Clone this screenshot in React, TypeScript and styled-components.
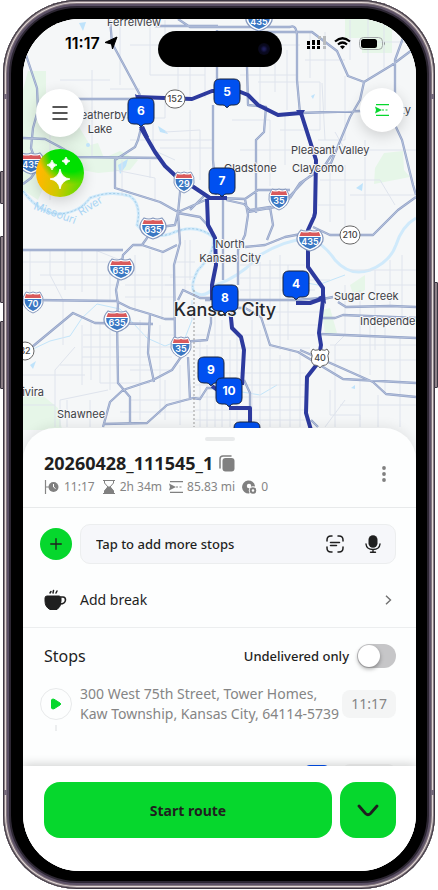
import React from "react";
import styled, { createGlobalStyle } from "styled-components";

const GlobalStyle = createGlobalStyle`
  * { box-sizing: border-box; }
  body { margin: 0; background: #fff; font-family: "Noto Sans", sans-serif; color: #1f1f1f; }
  button { font: inherit; color: inherit; border: 0; padding: 0; background: none; cursor: pointer; }
`;

/* ---------- Device ---------- */

const Device = styled.div`
  position: relative;
  display: flex;
  height: calc(100vh - 1px);
  min-height: 760px;
  margin: 0 3px 1px 3px;
  padding: 19px 19px 18px 20px;
  border-radius: 74px;
  background: #000;
  box-shadow:
    inset 0 0 0 1px #3d3742,
    inset 0 0 0 2px #8c8085,
    inset 0 0 0 3px #e4dada,
    inset 0 0 0 4px #85787f,
    inset 0 0 0 6px #5b5065,
    inset 0 0 0 8px #2d2733;
`;

const SideKey = styled.span<{ $side: "left" | "right"; $top: number; $height: number }>`
  position: absolute;
  ${(p) => p.$side}: -3px;
  top: ${(p) => p.$top}px;
  width: 4px;
  height: ${(p) => p.$height}px;
  border: 1px solid #3d3742;
  border-radius: 1px;
  background: #8c8087;
`;

const Antenna = styled.span<{ $side: "left" | "right"; $edge: "top" | "bottom" }>`
  position: absolute;
  ${(p) => p.$side}: 1px;
  ${(p) => p.$edge}: 94px;
  width: 3px;
  height: 5px;
  background: #75697a;
`;

const Screen = styled.main`
  position: relative;
  flex: 1;
  min-width: 0;
  display: flex;
  flex-direction: column;
  overflow: hidden;
  border-radius: 57px;
  background: #fff;
`;

/* ---------- Overlays ---------- */

const StatusBar = styled.div`
  position: absolute;
  inset: 11px 30px auto 42px;
  display: flex;
  align-items: center;
  justify-content: space-between;
  height: 26px;
  color: #000;
  font: 600 16px/26px Inter, sans-serif;
`;

const StatusGroup = styled.div<{ $gap: number }>`
  display: flex;
  align-items: center;
  gap: ${(p) => p.$gap}px;
`;

const Island = styled.div`
  position: absolute;
  top: 12px;
  left: 50%;
  width: 124px;
  height: 36px;
  margin-left: -62px;
  border-radius: 18px;
  background: #000;
  display: flex;
  align-items: center;
  justify-content: flex-end;
  padding-right: 12px;
`;

const Lens = styled.span`
  width: 12px;
  height: 12px;
  border-radius: 50%;
  background: radial-gradient(circle, #1e1e58 0 12%, #0a0a24 40%, #050509 100%);
`;

const MapActions = styled.div<{ $side: "left" | "right" }>`
  position: absolute;
  top: ${(p) => (p.$side === "left" ? 70 : 69)}px;
  ${(p) => p.$side}: ${(p) => (p.$side === "left" ? 13 : 12)}px;
  display: grid;
  justify-items: center;
  gap: 12px;
`;

const RoundButton = styled.button<{ $size: number; $magic?: boolean }>`
  width: ${(p) => p.$size}px;
  height: ${(p) => p.$size}px;
  border-radius: 50%;
  display: grid;
  place-items: center;
  background: ${(p) =>
    p.$magic
      ? "radial-gradient(circle at 72% 5%, #00e000 0 36%, rgba(0, 224, 0, 0) 58%), linear-gradient(100deg, #ffb800 15%, #d0c800 50%, #62dc00 90%)"
      : "#fff"};
  box-shadow: 0 4px 14px rgba(0, 0, 0, 0.16);
`;

/* ---------- Map ---------- */

const MapArea = styled.section`
  flex: none;
  aspect-ratio: 393 / 441;
  max-height: 52%;
  background: #f5f7f8;
  svg { display: block; width: 100%; height: 100%; }
`;

type Kind = "inter" | "us" | "oval";

const SHIELDS: [Kind, string, number, number][] = [
  ["inter", "435", 259, 20], ["inter", "29", 184, 182], ["inter", "435", 31, 163],
  ["inter", "635", 153, 228], ["inter", "635", 121, 269], ["inter", "635", 117, 321],
  ["inter", "70", 33, 302], ["inter", "35", 181, 347], ["inter", "35", 279, 199],
  ["inter", "435", 310, 240], ["us", "40", 320, 358], ["oval", "152", 175, 99],
  ["oval", "210", 350, 235], ["oval", "32", 25, 351],
];

const PINS: [string, number, number][] = [
  ["6", 141, 111], ["5", 227, 92], ["7", 222, 181], ["4", 296, 284],
  ["8", 225, 298], ["9", 211, 370], ["10", 229, 391], ["11", 247, 435],
];

function Shield({ kind, label, x, y }: { kind: Kind; label: string; x: number; y: number }) {
  const wide = label.length > 2;
  return (
    <g transform={`translate(${x} ${y})`}>
      {kind === "inter" && (
        <g transform={wide ? "scale(1.28 1)" : undefined}>
          <path d="M-7-10Q-3-8 0-10Q3-8 7-10Q11-5 10 1Q8 8 0 11Q-8 8-10 1Q-11-5-7-10Z" fill="#fff" stroke="#8598bd" strokeWidth="1" />
          <path d="M-7-8Q-3-7 0-8Q3-7 7-8L8.200-4H-8.200Z" fill="#d95a5c" />
          <path d="M-8.500-3H8.500Q9 5 0 9Q-9 5-8.500-3Z" fill="#3b78c3" />
        </g>
      )}
      {kind === "us" && (
        <path d="M-7-9Q-5-7-3-8Q-1-9 0-7Q1-9 3-8Q5-7 7-9L9-6Q7-2 8.500 1Q9 7 3 7.500Q1 8 0 10Q-1 8-3 7.500Q-9 7-8.500 1Q-7-2-9-6Z" fill="#fff" stroke="#666" />
      )}
      {kind === "oval" && (
        <rect x={wide ? -10 : -9} y="-9" width={wide ? 20 : 18} height="18" rx="9" fill="#fff" stroke="#666" />
      )}
      <text
        y={kind === "inter" ? 5 : 3}
        textAnchor="middle"
        fontSize="9"
        fontWeight={kind === "inter" ? 600 : 500}
        fill={kind === "inter" ? "#fff" : "#444"}
      >
        {label}
      </text>
    </g>
  );
}

function Pin({ label, x, y }: { label: string; x: number; y: number }) {
  return (
    <g transform={`translate(${x} ${y})`}>
      <path
        d="M-7-13H7Q13-13 13-7V7Q13 13 7 13H4Q2 13 1 15Q0 16-1 15Q-2 13-4 13H-7Q-13 13-13 7V-7Q-13-13-7-13Z"
        fill="#0050f0" stroke="#17223d" strokeWidth="1"
      />
      <text y="4" textAnchor="middle" fontSize="12" fontWeight="700" fill="#fff">{label}</text>
    </g>
  );
}

const MINOR =
  "M50 110V200M92 70V157M60 80H110M110 89H140M120 20V85M130 45H218M150 20V75H205M165 20V60M178 45V90M190 40V98M205 60V98M120 118H165V99M153 112V150L175 160M130 140H214M165 132L200 130V180M190 110V170M160 148H214M115 170L155 178V202M150 160V178M122 196V160" +
  "M260 30V110M275 32V92M287 50V110M310 32V78M325 32V110M240 45H300M240 75H297M258 82H320V130H280M322 83L325 140M305 60H345M345 76V140H318M232 120H270M240 150H310M270 120V186M285 115V165M335 132L345 150H416M350 20V60M368 20V80M384 20V68M360 42H416M330 165V222M345 165V230M320 180H380L395 205M350 195H416M365 140V220M318 205H345" +
  "M30 250V300M50 250V275L63 300V345M65 250V290M82 250V292M97 250V300M110 260V300M23 262H123M23 285H120M40 275H110M95 250L125 262M125 285H175M130 275H174M125 297H176M135 255V312M150 250V300M162 252V320M185 240V290M165 285H215M170 277H194M175 262H195M190 240V280" +
  "M82 325V385M91 320V380M100 323V383M110 325V390M83 335H175M83 347H174M82 357H172M60 365H150M23 375H85M75 347L55 370V427M100 383H150M130 370H172M130 400H190M120 412H193M60 427V400L108 390M67 400V427M90 400V427M140 320V420M160 325V415M165 380V420M180 365V425M23 405H55" +
  "M200 340V427M207 345V427M215 315V427M222 320V427M230 340V427M237 335V427M252 320V427M260 330V427M270 345V427M280 355V427M290 350V427M300 355V427M195 335H315M195 348H310M195 360H300M195 373H306M195 385H306M195 397H306M195 410H306M195 420H306" +
  "M250 255V315M260 262V315M270 260V320M280 255V350M288 265V340M240 265H305M240 278H308M240 290H315M250 312H320M262 325H318M330 280H310M345 285V335L335 345V427M360 290V420M375 270V350M390 260V305M402 255V318M350 270H416M375 285H416M330 345H416M335 360H416M340 405H416M370 320V375M385 318V394M400 338V427M330 390V415H360V427M378 395V427M325 427L345 400";

const ROADS =
  "M26 55L37 88L38 110L33 128L31 148L38 168L31 178L23 184M110 19L112 43L140 95M50 99H137M23 138L45 139L60 147L77 157L160 158M141 128L138 140L135 147L115 160V188L160 202L178 212" +
  "M155 19V26H218M178 19L190 27H290Q296 24 297 35V80L300 113L361 111M218 32H312L337 51L348 76L364 82L392 65L412 50M403 38L395 60V125L402 140L413 185L416 195" +
  "M364 82L360 100L350 117L331 163L300 183L290 198M335 150L325 165L305 180L288 198M217 30V90M213 105V160L216 195M247 67L248 105L266 107L264 132L256 140V213" +
  "M218 198L245 199L258 190H290M245 199L248 215L245 235L238 250V285M223 200V280M226 200L244 204L250 210L270 207L273 225L267 240M290 198L275 207L248 212M245 247L265 245L285 237L312 232M313 227L330 235H373L398 210L416 197" +
  "M23 250H123M178 212L210 198M178 212L175 225L153 228L147 238L142 245L133 245L123 255L121 269L116 290L118 304L117 321L118 383L130 397V425M142 245L163 252L177 245M178 213L180 243L174 265L175 340M181 182L178 213L200 217L212 230M190 210L205 195" +
  "M33 300L116 301L130 308L150 314L165 319H175M23 355L32 347L73 313L95 323L153 324M150 314L148 353L154 382M181 357L172 370L153 380L123 390L110 402L103 427M188 357L190 400M103 424L147 423L167 405L193 398L200 399L207 388H216M181 342L207 340L211 323V310M178 300L183 290L200 298H213" +
  "M205 300H296L322 298M213 308H245L261 317L270 345L298 352L343 379L416 383M300 350L328 362L373 382L386 394L416 397M323 299L333 297M338 302L346 307L391 306L416 307M321 318H335L343 315L416 318M320 334L416 338M244 380L250 393V427M311 420L318 427";

const ROUTE =
  "M137 97L192 99L212 91H238L248 95L258 105L278 115L301 113L316 160L315 213L314 217L308 230V267L323 288V300L319 333L321 345L318 363L307 377L306 413L311 430" +
  "M296 303H310L324 298M141 128L155 152L165 166L180 180L192 186L210 198H227M207 199L208 225L215 238L216 265L212 285V300M230 308L232 328L241 337L244 350L242 385M229 408H250V430M212 386L220 392";

function MapView() {
  return (
    <MapArea aria-label="Route map">
      <svg viewBox="23 19 393 441" preserveAspectRatio="xMidYMin slice" fontFamily="Inter, sans-serif">
        <rect x="23" y="19" width="393" height="441" fill="#f5f7f8" />
        <g fill="#e6f6e8">
          <path d="M28 71H46V110H62L76 122L90 145L98 143L104 158L120 151L138 160L130 170L98 173L70 168L50 172L38 200L23 190V90Z" />
          <path d="M345 19H392V53H362V38H345ZM375 168L384 153L403 151L404 170L410 177L374 184Z" />
          <path d="M23 392L42 395L58 408L62 430H23ZM350 285L365 275V290L354 297ZM322 310L330 308L337 333L325 335Z" />
        </g>
        <g fill="#bfe3fb">
          <path d="M79 23L86 22L83 31ZM158 126L166 131L168 134L160 132ZM118 165L128 159L126 166L120 174ZM356 188L363 183L362 191ZM311 96L315 94L313 99ZM30 365L36 361L33 369ZM351 388L355 385V389Z" />
          <circle cx="88" cy="145" r="2" />
        </g>
        <g fill="none">
          <path d="M23 191Q40 214 60 214Q80 212 90 198Q110 190 130 196Q142 205 137 225Q150 240 170 234Q195 222 213 237Q216 252 198 270Q190 285 194 292Q205 300 216 285Q240 277 260 255Q285 240 310 238Q325 245 335 260Q350 277 370 270Q390 262 396 245Q402 226 416 218" stroke="#d0eafb" strokeWidth="3" />
          <path d="M23 191Q40 214 60 214Q80 212 90 198Q110 190 130 196Q142 205 137 225Q150 240 170 234Q195 222 213 237Q216 252 198 270Q190 285 194 292" stroke="#9cc8e4" strokeDasharray="2 2" />
          <path d="M33 349L50 341L70 336L82 318L97 304L120 309L147 338L165 346L185 338L192 320V300M230 390L260 395L277 385M290 280L318 285L345 275" stroke="#c3e5fa" strokeWidth="1" />
          <path d={MINOR} stroke="#dfe4ed" strokeLinejoin="round" />
          <path d={ROADS} stroke="#94a4c8" strokeWidth="2.300" strokeLinejoin="round" />
          <path d={ROADS} stroke="#b3bfda" strokeWidth="1" strokeLinejoin="round" />
          <path d="M194 290V427" stroke="#999" strokeDasharray="2 2" />
        </g>
        <g fontSize="11" fill="#a9d5f5">
          <text transform="translate(33 209) rotate(20)">Missouri</text>
          <text transform="translate(81 216) rotate(-32)">River</text>
        </g>
        <path d={ROUTE} fill="none" stroke="#2d3a9e" strokeWidth="4" strokeLinejoin="round" />
        <path d="M135 94L142 98L136 99ZM139 127L144 126L149 137L145 138ZM296 110L305 110L301 117ZM318 297L325 294L326 304Z" fill="#2d3a9e" />
        {SHIELDS.map(([kind, label, x, y]) => (
          <Shield key={`${label}-${x}`} kind={kind} label={label} x={x} y={y} />
        ))}
        <g fontSize="11" fill="#3d4046" stroke="#f7f8f9" strokeWidth="2" paintOrder="stroke" strokeLinejoin="round">
          <text x="107" y="26">Ferrelview</text>
          <text x="127" y="119" textAnchor="end">Weatherby</text>
          <text x="100" y="133" textAnchor="middle">Lake</text>
          <text x="291" y="154">Pleasant Valley</text>
          <text x="292" y="172">Claycomo</text>
          <text x="224" y="172">Gladstone</text>
          <text x="230" y="248" textAnchor="middle">North</text>
          <text x="230" y="262" textAnchor="middle">Kansas City</text>
          <text x="334" y="300">Sugar Creek</text>
          <text x="360" y="325">Independence</text>
          <text x="57" y="418">Shawnee</text>
          <text x="44" y="396" textAnchor="end">Quivira</text>
          <text x="411" y="114" textAnchor="end">Liberty</text>
          <text x="225" y="316" textAnchor="middle" fontSize="18" fontWeight="500" fill="#25282d">Kansas City</text>
        </g>
        {PINS.map(([label, x, y]) => (
          <Pin key={label} label={label} x={x} y={y} />
        ))}
      </svg>
    </MapArea>
  );
}

/* ---------- Sheet ---------- */

const Sheet = styled.section`
  position: relative;
  flex: 1;
  min-height: 0;
  margin-top: -32px;
  display: flex;
  flex-direction: column;
  border-radius: 32px 32px 0 0;
  background: #fdfefe;
  box-shadow: 0 -2px 12px rgba(0, 0, 0, 0.08);
`;

const Handle = styled.div`
  flex: none;
  width: 30px;
  height: 4px;
  margin: 9px auto 0;
  border-radius: 2px;
  background: #e8eaeb;
`;

const Header = styled.header`
  flex: none;
  display: flex;
  align-items: center;
  justify-content: space-between;
  height: 67px;
  padding: 0 20px 0 21px;
  border-bottom: 1px solid #e8eaeb;
`;

const TitleRow = styled.div`
  display: flex;
  align-items: center;
  gap: 6px;
  height: 26px;
`;

const Title = styled.h1`
  margin: 0;
  font-size: 18px;
  line-height: 26px;
  font-weight: 700;
`;

const Stats = styled.div`
  display: flex;
  gap: 7px;
  height: 22px;
  color: #858585;
  font-size: 12px;
  line-height: 22px;
`;

const Stat = styled.span`
  display: flex;
  align-items: center;
  gap: 4px;
  white-space: nowrap;
`;

const IconButton = styled.button<{ $width: number }>`
  flex: none;
  display: grid;
  place-items: center;
  width: ${(p) => p.$width}px;
  height: 26px;
`;

const Body = styled.div`
  flex: 1;
  min-height: 0;
  overflow: hidden;
`;

const AddRow = styled.div`
  display: flex;
  align-items: center;
  gap: 8px;
  padding: 16px 20px 0 17px;
`;

const AddButton = styled.button`
  flex: none;
  display: grid;
  place-items: center;
  width: 32px;
  height: 32px;
  border-radius: 50%;
  background: #06d72d;
`;

const SearchBox = styled.div`
  flex: 1;
  min-width: 0;
  display: flex;
  align-items: center;
  gap: 12px;
  height: 40px;
  padding: 0 9px 0 15px;
  border: 1px solid #eceeef;
  border-radius: 10px;
  background: #f6f7fa;
`;

const SearchInput = styled.input`
  flex: 1;
  min-width: 0;
  border: 0;
  padding: 0;
  outline: 0;
  background: none;
  font: 500 13px/20px "Noto Sans", sans-serif;
  color: #1f1f1f;
  &::placeholder { color: #1f1f1f; opacity: 1; }
`;

const BreakRow = styled.button`
  display: flex;
  align-items: center;
  gap: 13px;
  width: 100%;
  height: 64px;
  padding: 8px 20px 0 21px;
  border-bottom: 1px solid #eceeef;
  text-align: left;
  font-size: 14px;
  span { flex: 1; }
`;

const StopsHeader = styled.div`
  display: flex;
  align-items: center;
  justify-content: space-between;
  padding: 16px 20px 0 21px;
`;

const StopsTitle = styled.h2`
  margin: 0;
  font-size: 16px;
  line-height: 24px;
  font-weight: 400;
`;

const SwitchLabel = styled.label`
  display: flex;
  align-items: center;
  gap: 8px;
  font-size: 13px;
  font-weight: 500;
  line-height: 24px;
`;

const Switch = styled.input`
  appearance: none;
  width: 39px;
  height: 24px;
  margin: 0;
  padding: 1px;
  border-radius: 12px;
  background: #c6c6c8;
  &::before {
    content: "";
    display: block;
    width: 22px;
    height: 22px;
    border-radius: 50%;
    background: #fff;
    box-shadow: 0 2px 4px rgba(0, 0, 0, 0.35);
  }
  &:checked { background: #06d72d; }
  &:checked::before { margin-left: 15px; }
`;

const StopList = styled.ol`
  list-style: none;
  margin: 0;
  padding: 16px 20px 0 17px;
  display: grid;
  gap: 34px;
`;

const StopRow = styled.li`
  display: grid;
  grid-template-columns: 32px 1fr auto;
  column-gap: 8px;
  align-items: center;
  color: #858585;
  font-size: 14px;
  line-height: 20px;
`;

const StopMarker = styled.div`
  align-self: start;
  display: grid;
  justify-items: center;
  gap: 5px;
  height: 40px;
  padding-top: 4px;
`;

const StopDot = styled.span`
  display: grid;
  place-items: center;
  width: 32px;
  height: 32px;
  border: 1px solid #e8eaeb;
  border-radius: 50%;
`;

const Connector = styled.span`
  width: 2px;
  height: 6px;
  background: #eceeef;
`;

const Address = styled.div`
  white-space: nowrap;
  min-width: 0;
`;

const TimeChip = styled.time`
  justify-self: end;
  padding: 0 9px;
  margin-left: -8px;
  border-radius: 8px;
  background: #f4f5f5;
  line-height: 28px;
`;

const NextTag = styled.span`
  justify-self: end;
  width: 26px;
  height: 26px;
  margin-right: 12px;
  border-radius: 6px;
  background: #0050f0;
`;

const Footer = styled.footer`
  position: relative;
  flex: none;
  display: grid;
  grid-template-columns: 1fr 56px;
  gap: 8px;
  padding: 16px 20px 33px 21px;
  background: #fff;
  box-shadow: 0 -1px 10px rgba(0, 0, 0, 0.2);
`;

const Action = styled.button`
  display: grid;
  place-items: center;
  height: 56px;
  border-radius: 16px;
  background: #06d72d;
  font-size: 14px;
  font-weight: 700;
`;

/* ---------- Icons ---------- */

const LocationIcon = () => (
  <svg width="14" height="14" viewBox="0 0 14 14"><path d="M13 1L8.500 13L7.500 8L1 6.500Z" fill="#000" stroke="#000" strokeLinejoin="round" /></svg>
);

const SignalIcon = () => (
  <svg width="20" height="14" viewBox="0 0 20 14">
    <path d="M12 0h3v3h-3zM17 0h3v9h-3zM17 10h3v3h-3z" fill="#b9bcbe" />
    <path d="M1 5h3v4H1zM6 4h3v5H6zM1 10h3v3H1zM6 10h3v3H6zM11 4h3v5h-3zM11 10h3v3h-3z" fill="#000" />
  </svg>
);

const WifiIcon = () => (
  <svg width="17" height="13" viewBox="0 0 17 13" fill="none" stroke="#000" strokeWidth="2.200">
    <path d="M1 4.500Q8.500-2 16 4.500M4 7.500Q8.500 3.500 13 7.500" />
    <path d="M6 9.500Q8.500 7.500 11 9.500L8.500 12.200Z" fill="#000" stroke="none" />
  </svg>
);

const BatteryIcon = () => (
  <svg width="27" height="13" viewBox="0 0 27 13">
    <rect x=".5" y=".5" width="23" height="12" rx="4" fill="none" stroke="#a3a7a9" />
    <rect x="2" y="2" width="16" height="9" rx="2.500" fill="#000" />
    <path d="M25 4.500Q27 6.500 25 8.500Z" fill="#8f9395" />
  </svg>
);

const MenuIcon = () => (
  <svg width="16" height="14" viewBox="0 0 16 14" stroke="#1f1f1f" strokeWidth="1.500" strokeLinecap="round"><path d="M1 1H15M1 7H15M1 13H15" /></svg>
);

const SparkleIcon = () => (
  <svg width="48" height="48" viewBox="0 0 48 48" fill="#fff" stroke="#fff" strokeWidth=".8" strokeLinejoin="round">
    <path d="M24 20Q25.500 29 34 30Q25.500 31.500 24 40Q22.500 31.500 14 30Q22.500 29 24 20Z" />
    <path d="M16 11Q17 15.500 21 16Q17 17 16 21Q15 17 11 16Q15 15.500 16 11ZM30 8Q31 11.500 34 12Q31 13 30 16Q29 13 26 12Q29 11.500 30 8Z" />
  </svg>
);

const RouteIcon = ({ color }: { color: string }) => (
  <svg width="14" height="12" viewBox="0 0 14 12" stroke={color} fill={color} strokeWidth="1.200">
    <path d="M1 .6H14M1 11.400H14" />
    <path d="M7 6H14" strokeDasharray="2 1.500" />
    <path d="M0 2.500L7 6L0 9.500L1 6Z" stroke="none" />
  </svg>
);

const StartTimeIcon = () => (
  <svg width="16" height="14" viewBox="0 0 16 14">
    <path d="M1.500 0V14M1.500 7H5" stroke="#858585" strokeWidth="1.200" />
    <circle cx="9.500" cy="7" r="5" fill="#808080" />
    <path d="M9.500 4V7L11.500 8.500" stroke="#fff" fill="none" />
  </svg>
);

const HourglassIcon = () => (
  <svg width="14" height="14" viewBox="0 0 14 14" stroke="#808080" fill="#808080">
    <path d="M1 .5H13M1 13.500H13" />
    <path d="M2.500 1V3L6 7L2.500 11V13H11.500V11L8 7L11.500 3V1" fill="none" />
    <path d="M5.500 6.500H8.500L11.500 10.500V13H2.500V10.500Z" stroke="none" />
  </svg>
);

const PinTimeIcon = () => (
  <svg width="15" height="15" viewBox="0 0 15 15">
    <path d="M7 13.500A6.500 6.500 0 1 1 13 6" fill="#808080" />
    <path d="M13 6L7 13.500L6 9Z" fill="#808080" />
    <circle cx="7" cy="6" r="2.200" fill="#fff" />
    <circle cx="11" cy="10.500" r="4.200" fill="#fff" />
    <circle cx="11" cy="10.500" r="2.300" fill="none" stroke="#808080" strokeWidth="2" />
  </svg>
);

const CopyIcon = () => (
  <svg width="16" height="17" viewBox="0 0 16 17">
    <path d="M1 13V4Q1 1 4 1H12" fill="none" stroke="#808080" strokeWidth="1.500" strokeLinecap="round" />
    <rect x="3.500" y="3" width="12" height="13.500" rx="3" fill="#808080" />
  </svg>
);

const MoreIcon = () => (
  <svg width="4" height="16" viewBox="0 0 4 16" fill="#808080"><circle cx="2" cy="2" r="1.900" /><circle cx="2" cy="8" r="1.900" /><circle cx="2" cy="14" r="1.900" /></svg>
);

const PlusIcon = () => (
  <svg width="12" height="12" viewBox="0 0 12 12" stroke="#1f1f1f" strokeWidth="1.300" strokeLinecap="round"><path d="M6 .7V11.300M.7 6H11.300" /></svg>
);

const ScanIcon = () => (
  <svg width="18" height="18" viewBox="0 0 18 18" fill="none" stroke="#1f1f1f" strokeWidth="1.500" strokeLinecap="round">
    <path d="M1 6V5Q1 1 5 1H6M12 1H13Q17 1 17 5V6M17 12V13Q17 17 13 17H12M6 17H5Q1 17 1 13V12M4.500 7.500H13.500M4.500 10.500H10.500" />
  </svg>
);

const MicIcon = () => (
  <svg width="16" height="18" viewBox="0 0 16 18" fill="none" stroke="#1f1f1f" strokeWidth="1.400" strokeLinecap="round">
    <rect x="3.500" y=".2" width="9" height="12.500" rx="4.500" fill="#1f1f1f" stroke="none" />
    <path d="M1 9Q1.500 14.500 8 14.500Q14.500 14.500 15 9M8 14.500V17M5.500 17.200H10.500" />
  </svg>
);

const CupIcon = () => (
  <svg width="23" height="22" viewBox="0 0 23 22">
    <path d="M3 7H15Q17 7 17 9V12Q17 18 13 20.500H6Q1 18 1 12V9Q1 7 3 7Z" fill="#1f1f1f" stroke="#1f1f1f" strokeLinejoin="round" />
    <path d="M17 8H19Q21.500 8 21.500 11Q21 15 16 15" fill="none" stroke="#1f1f1f" strokeWidth="1.600" />
    <path d="M6 4L7 2.500M9 4L9.500 1.500M12 4L13 2" stroke="#1f1f1f" strokeWidth="1.500" strokeLinecap="round" />
  </svg>
);

const ChevronRight = () => (
  <svg width="16" height="10" viewBox="0 0 16 10" fill="none" stroke="#707070" strokeWidth="1.400"><path d="M6 .7L10.500 5L6 9.300" /></svg>
);

const ChevronDown = () => (
  <svg width="22" height="13" viewBox="0 0 22 13" fill="none" stroke="#1f1f1f" strokeWidth="2.800" strokeLinecap="round"><path d="M2 2L8.500 9.500Q11 12 13.500 9.500L20 2" /></svg>
);

const PlayIcon = () => (
  <svg width="12" height="12" viewBox="0 0 12 12"><path d="M1.500 2Q2 .5 4 1.200L10 5Q11.500 6 10 7L4 10.800Q2 11.500 1.500 10Z" fill="#06d72d" stroke="#06d72d" /></svg>
);

export default function App() {
  return (
    <>
      <GlobalStyle />
      <Device>
        <SideKey $side="left" $top={171} $height={33} />
        <SideKey $side="left" $top={236} $height={67} />
        <SideKey $side="left" $top={321} $height={68} />
        <SideKey $side="right" $top={282} $height={106} />
        <Antenna $side="left" $edge="top" />
        <Antenna $side="right" $edge="top" />
        <Antenna $side="left" $edge="bottom" />
        <Antenna $side="right" $edge="bottom" />
        <Screen>
          <MapView />
          <StatusBar>
            <StatusGroup $gap={4}>11:17<LocationIcon /></StatusGroup>
            <StatusGroup $gap={8}><SignalIcon /><WifiIcon /><BatteryIcon /></StatusGroup>
          </StatusBar>
          <Island><Lens /></Island>
          <MapActions $side="left">
            <RoundButton $size={48} aria-label="Menu"><MenuIcon /></RoundButton>
            <RoundButton $size={48} $magic aria-label="Assistant"><SparkleIcon /></RoundButton>
          </MapActions>
          <MapActions $side="right">
            <RoundButton $size={44} aria-label="Route overview"><RouteIcon color="#06d72d" /></RoundButton>
          </MapActions>

          <Sheet>
            <Handle />
            <Header>
              <div>
                <TitleRow>
                  <Title>20260428_111545_1</Title>
                  <IconButton $width={16} aria-label="Copy route"><CopyIcon /></IconButton>
                </TitleRow>
                <Stats>
                  <Stat><StartTimeIcon />11:17</Stat>
                  <Stat><HourglassIcon />2h 34m</Stat>
                  <Stat><RouteIcon color="#808080" />85.83 mi</Stat>
                  <Stat><PinTimeIcon />0</Stat>
                </Stats>
              </div>
              <IconButton $width={24} aria-label="More options"><MoreIcon /></IconButton>
            </Header>
            <Body>
              <AddRow>
                <AddButton aria-label="Add stop"><PlusIcon /></AddButton>
                <SearchBox>
                  <SearchInput aria-label="Add more stops" placeholder="Tap to add more stops" />
                  <IconButton $width={26} aria-label="Scan"><ScanIcon /></IconButton>
                  <IconButton $width={26} aria-label="Voice input"><MicIcon /></IconButton>
                </SearchBox>
              </AddRow>
              <BreakRow><CupIcon /><span>Add break</span><ChevronRight /></BreakRow>
              <StopsHeader>
                <StopsTitle>Stops</StopsTitle>
                <SwitchLabel>Undelivered only<Switch type="checkbox" /></SwitchLabel>
              </StopsHeader>
              <StopList>
                <StopRow>
                  <StopMarker><StopDot><PlayIcon /></StopDot><Connector /></StopMarker>
                  <Address>300 West 75th Street, Tower Homes,<br />Kaw Township, Kansas City, 64114-5739</Address>
                  <TimeChip>11:17</TimeChip>
                </StopRow>
                <StopRow>
                  <StopMarker />
                  <NextTag />
                  <TimeChip>11:21</TimeChip>
                </StopRow>
              </StopList>
            </Body>
            <Footer>
              <Action>Start route</Action>
              <Action aria-label="More route actions"><ChevronDown /></Action>
            </Footer>
          </Sheet>
        </Screen>
      </Device>
    </>
  );
}
